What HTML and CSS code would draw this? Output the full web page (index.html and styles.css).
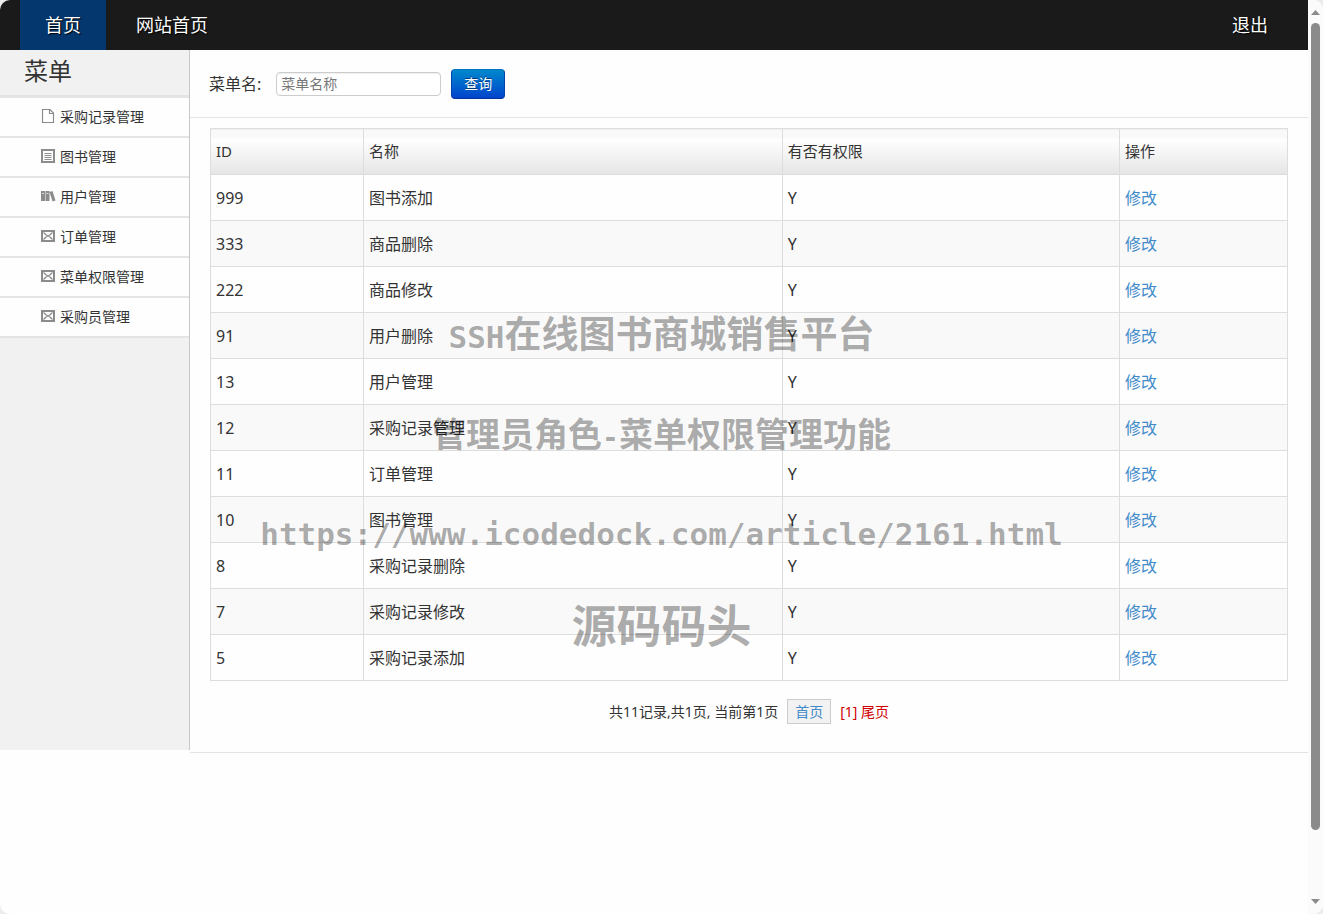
FILE: index.html
```html
<!DOCTYPE html>
<html lang="zh-CN">
<head>
<meta charset="utf-8">
<title>菜单权限管理</title>
<link rel="stylesheet" href="styles.css">
</head>
<body>
<div class="window">
  <div class="page">
    <nav class="navbar">
      <a class="nav-link active" href="#">首页</a>
      <a class="nav-link" href="#">网站首页</a>
      <a class="nav-link logout" href="#">退出</a>
    </nav>
    <div class="layout">
      <aside class="sidebar">
        <h2 class="sidebar-title">菜单</h2>
        <ul class="menu">
          <li><a class="menu-link" href="#"><svg class="icon" viewBox="0 0 14 14"><path d="M1.500 .5h7.500l3.500 3.500v9.500h-11z M8.500.5v4h4" fill="none" stroke="#8c8c8c" stroke-width="1.200"/></svg>采购记录管理</a></li>
          <li><a class="menu-link" href="#"><svg class="icon" viewBox="0 0 14 14"><rect x="1" y="1" width="12" height="12" fill="none" stroke="#8c8c8c" stroke-width="2"/><path d="M3.500 4.500h7M3.500 6.500h7M3.500 8.500h7M3.500 10.500h7" stroke="#8c8c8c"/></svg>图书管理</a></li>
          <li><a class="menu-link" href="#"><svg class="icon" viewBox="0 0 14 14"><path d="M0 2h4v10H0zM4.500 2h4v10h-4zM8.500 3l3-1 3 9.500-3 1z" fill="#8c8c8c"/><path d="M1 4.500h2M5.500 4.500h2" stroke="#ddd"/></svg>用户管理</a></li>
          <li><a class="menu-link" href="#"><svg class="icon" viewBox="0 0 14 14"><path d="M1 2h12v10H1z" fill="none" stroke="#8c8c8c" stroke-width="2"/><path d="M2.500 3.500l4.500 4 4.500-4M2.500 10.500l3-3M11.500 10.500l-3-3" fill="none" stroke="#8c8c8c" stroke-width="1.300"/></svg>订单管理</a></li>
          <li><a class="menu-link" href="#"><svg class="icon" viewBox="0 0 14 14"><path d="M1 2h12v10H1z" fill="none" stroke="#8c8c8c" stroke-width="2"/><path d="M2.500 3.500l4.500 4 4.500-4M2.500 10.500l3-3M11.500 10.500l-3-3" fill="none" stroke="#8c8c8c" stroke-width="1.300"/></svg>菜单权限管理</a></li>
          <li><a class="menu-link" href="#"><svg class="icon" viewBox="0 0 14 14"><path d="M1 2h12v10H1z" fill="none" stroke="#8c8c8c" stroke-width="2"/><path d="M2.500 3.500l4.500 4 4.500-4M2.500 10.500l3-3M11.500 10.500l-3-3" fill="none" stroke="#8c8c8c" stroke-width="1.300"/></svg>采购员管理</a></li>
        </ul>
      </aside>
      <main class="content">
        <form class="search">
          <label class="search-label" for="menu-name">菜单名:</label>
          <input class="search-input" id="menu-name" type="text" placeholder="菜单名称">
          <button class="search-button" type="button">查询</button>
        </form>
        <div class="results">
          <table class="grid">
            <colgroup><col class="col-id"><col class="col-name"><col class="col-flag"><col class="col-action"></colgroup>
            <thead><tr><th>ID</th><th>名称</th><th>有否有权限</th><th>操作</th></tr></thead>
            <tbody>
              <tr><td>999</td><td>图书添加</td><td>Y</td><td><a href="#">修改</a></td></tr>
              <tr><td>333</td><td>商品删除</td><td>Y</td><td><a href="#">修改</a></td></tr>
              <tr><td>222</td><td>商品修改</td><td>Y</td><td><a href="#">修改</a></td></tr>
              <tr><td>91</td><td>用户删除</td><td>Y</td><td><a href="#">修改</a></td></tr>
              <tr><td>13</td><td>用户管理</td><td>Y</td><td><a href="#">修改</a></td></tr>
              <tr><td>12</td><td>采购记录管理</td><td>Y</td><td><a href="#">修改</a></td></tr>
              <tr><td>11</td><td>订单管理</td><td>Y</td><td><a href="#">修改</a></td></tr>
              <tr><td>10</td><td>图书管理</td><td>Y</td><td><a href="#">修改</a></td></tr>
              <tr><td>8</td><td>采购记录删除</td><td>Y</td><td><a href="#">修改</a></td></tr>
              <tr><td>7</td><td>采购记录修改</td><td>Y</td><td><a href="#">修改</a></td></tr>
              <tr><td>5</td><td>采购记录添加</td><td>Y</td><td><a href="#">修改</a></td></tr>
            </tbody>
          </table>
          <div class="pager">
            <span>共11记录,共1页, 当前第1页</span>
            <a class="pager-first" href="#">首页</a>
            <span class="pager-current">[1] 尾页</span>
          </div>
        </div>
      </main>
    </div>
  </div>
  <div class="scrollbar" aria-hidden="true">
    <svg class="arrow" viewBox="0 0 9 5"><path d="M0 5h9L4.500 0z" fill="#8b8b8b"/></svg>
    <div class="track"><div class="thumb"></div></div>
    <svg class="arrow" viewBox="0 0 9 5"><path d="M0 0h9L4.500 5z" fill="#8b8b8b"/></svg>
  </div>
  <div class="watermark">
    <p class="mark-title"><span class="mark-latin">SSH</span>在线图书商城销售平台</p>
    <p class="mark-subtitle">管理员角色<span class="mark-latin">-</span>菜单权限管理功能</p>
    <p class="mark-url">https://www.icodedock.com/article/2161.html</p>
    <p class="mark-brand">源码码头</p>
  </div>
</div>
</body>
</html>
```
FILE: styles.css
```css
* { box-sizing: border-box; }

html { background: #ececec; }

body {
  margin: 0;
  color: #333;
  font-family: "Noto Sans", "Noto Sans CJK SC", sans-serif;
  font-size: 16px;
  line-height: 20px;
}

a { color: #428bca; text-decoration: none; }

.window {
  position: relative;
  display: flex;
  min-height: 100vh;
  overflow: hidden;
  border-radius: 10px;
  background: #fefefe;
}

.page { flex: 1; min-width: 0; }

.navbar {
  display: flex;
  padding: 0 15px 0 20px;
  background: #1a1a1a;
}

.nav-link {
  padding: 0 25px;
  color: #fff;
  font-size: 18px;
  line-height: 50px;
  text-shadow: 1px 1px 1px #000;
}

.nav-link.active { margin-right: 5px; background: #04376d; }

.logout { margin-left: auto; }

.layout { display: flex; align-items: flex-start; }

.sidebar {
  flex: 0 0 190px;
  min-height: 700px;
  border-right: 1px solid #c8c8c8;
  background: #f1f1f1;
}

.sidebar-title {
  margin: 0;
  padding: 0 24px 3px;
  border-bottom: 3px solid #e4e4e4;
  font-size: 24px;
  font-weight: 400;
  line-height: 42px;
}

.menu { margin: 0; padding: 0; list-style: none; }

.menu-link {
  display: flex;
  align-items: center;
  gap: 5px;
  padding: 0 0 0 41px;
  border-bottom: 2px solid #e4e4e4;
  background: #fefefe;
  color: #333;
  font-size: 14px;
  line-height: 38px;
}

.icon { width: 14px; height: 14px; margin-bottom: 2px; overflow: visible; }

.content { flex: 1; min-width: 0; }

.search {
  display: flex;
  align-items: center;
  padding: 19px 19px 18px;
  border-bottom: 1px solid #e4e4e4;
}

.search-label { margin-right: 15px; }

.search-input {
  width: 165px;
  height: 24px;
  margin-right: 10px;
  padding: 0 4px 2px;
  border: 1px solid #ccc;
  border-radius: 4px;
  box-shadow: inset 0 1px 1px #eee;
  background: #fff;
  color: #555;
  font: inherit;
  font-size: 14px;
}

.search-input::placeholder { color: #777; }

.search-button {
  padding: 4px 12px;
  border: 1px solid;
  border-color: #0074c0 #0044b0 #003399;
  border-radius: 4px;
  background: linear-gradient(#0088cc, #0044cc);
  color: #fff;
  font: inherit;
  font-size: 14px;
  text-shadow: 0 -1px 0 #003c80;
}

.results {
  padding: 10px 20px 28px;
  border-bottom: 1px solid #e4e4e4;
}

.grid {
  width: 100%;
  table-layout: fixed;
  border-collapse: collapse;
}

.col-id { width: 14.2%; }
.col-name { width: 38.9%; }
.col-flag { width: 31.3%; }

.grid th,
.grid td {
  height: 46px;
  padding: 0 5px;
  border: 1px solid #ddd;
  text-align: left;
}

.grid th {
  padding-bottom: 2px;
  background: linear-gradient(#f9f9f9 9px, #fff 9px, #e5e5e5);
  font-size: 15px;
  font-weight: 400;
}

.grid tbody tr:nth-child(even) { background: #f9f9f9; }

.pager {
  display: flex;
  justify-content: center;
  align-items: center;
  gap: 9px;
  margin-top: 18px;
  font-size: 14px;
}

.pager-first {
  padding: 2px 7px 1px;
  border: 1px solid #ccc;
  background: #f2f2f2;
}

.pager-current { color: #d00000; }

.scrollbar {
  display: flex;
  flex: 0 0 15px;
  flex-direction: column;
  align-items: center;
  gap: 8px;
  padding: 10px 0;
  background: #fbfbfb;
}

.arrow { width: 9px; height: 5px; }

.track { flex: 1; width: 9px; }

.thumb { height: 93%; border-radius: 5px; background: #8b8b8b; }

.watermark {
  position: absolute;
  inset: 284px 0 auto;
  color: rgba(0, 0, 0, 0.32);
  font-weight: 700;
  line-height: 100px;
  text-align: center;
  white-space: nowrap;
  pointer-events: none;
}

.watermark p { height: 100px; margin: 0; }

.mark-latin,
.mark-url { font-family: "DejaVu Sans Mono", monospace; }

.mark-latin { line-height: 1; }

.mark-title { font-size: 37px; }
.mark-title .mark-latin { font-size: 31px; }
.mark-subtitle { font-size: 34px; }
.mark-subtitle .mark-latin { font-size: 28px; }
.mark-url { font-size: 31px; }
.mark-brand { font-size: 45px; line-height: 84px; }
```
